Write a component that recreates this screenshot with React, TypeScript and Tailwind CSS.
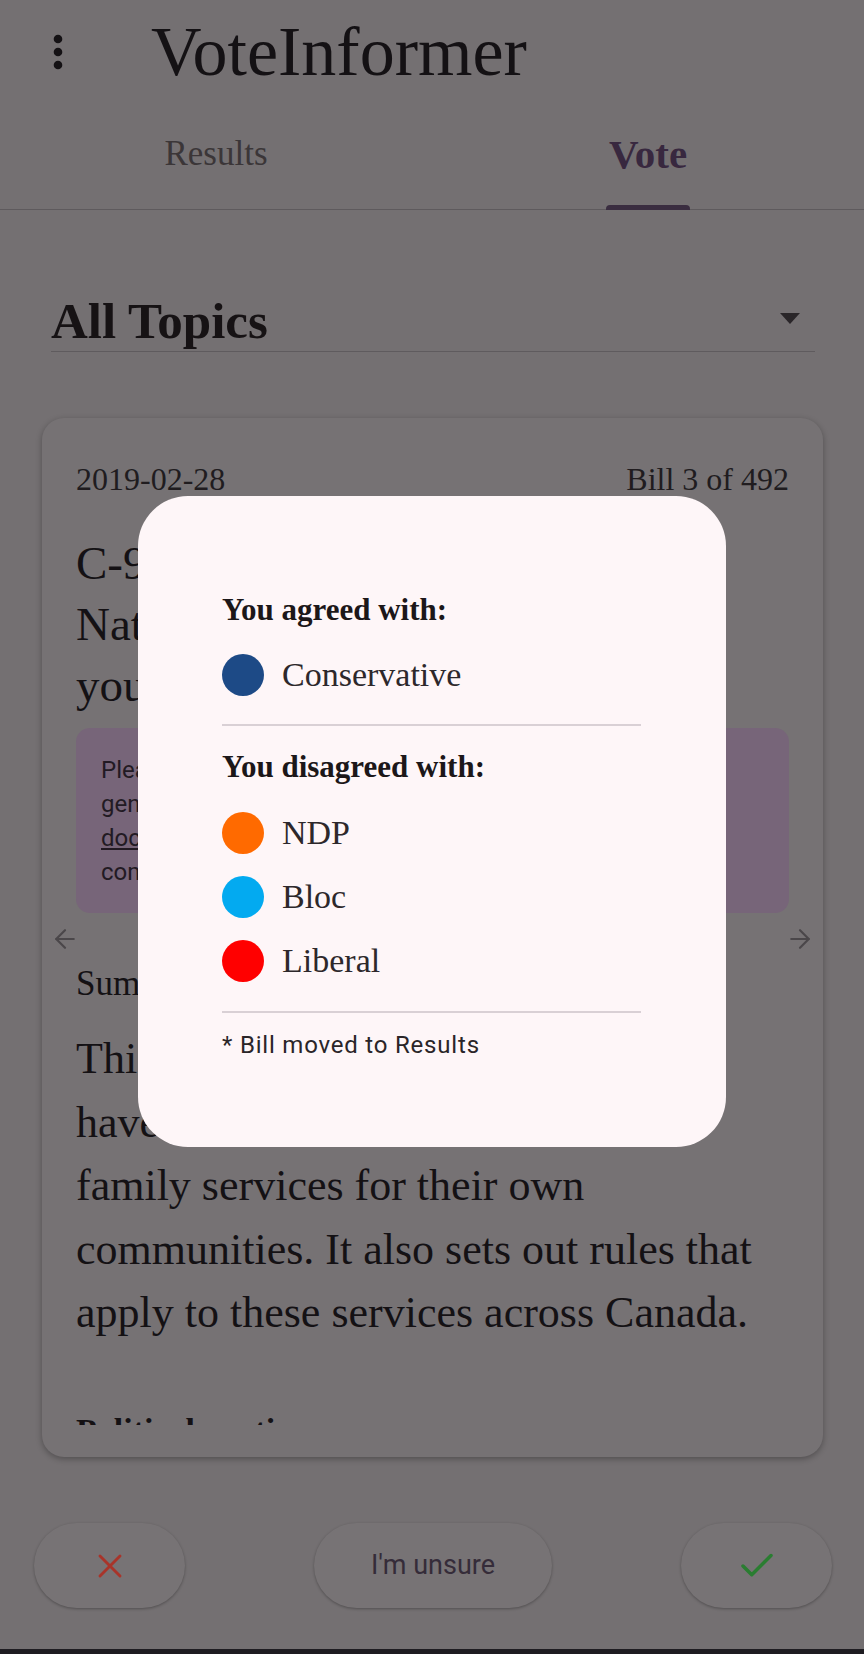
import { ArrowLeft, ArrowRight, X, Check } from "lucide-react";

const serif = { fontFamily: '"Liberation Serif", "Times New Roman", serif' };
const sans = { fontFamily: 'Roboto, "Liberation Sans", Arial, sans-serif' };

const agreed = [{ name: "Conservative", color: "bg-[#1d4a86]" }];
const disagreed = [
  { name: "NDP", color: "bg-[#ff6a00]" },
  { name: "Bloc", color: "bg-[#03aaf0]" },
  { name: "Liberal", color: "bg-[#ff0000]" },
];

function PartyRow({ name, color }: { name: string; color: string }) {
  return (
    <div className="flex h-[64px] items-center gap-[18px]">
      <span className={`h-[42px] w-[42px] shrink-0 rounded-full ${color}`} />
      <span className="text-[34px] leading-none text-[#2d282b]" style={serif}>
        {name}
      </span>
    </div>
  );
}

export default function App() {
  return (
    <div className="flex h-[1654px] flex-col bg-[#747072] text-[#141114]" style={serif}>
      {/* App bar */}
      <div className="flex h-[104px] items-center pl-[46px]">
        <svg width="24" height="40" viewBox="0 0 24 40" className="text-[#141114]">
          <circle cx="12" cy="7" r="4.3" fill="currentColor" />
          <circle cx="12" cy="20" r="4.3" fill="currentColor" />
          <circle cx="12" cy="33" r="4.3" fill="currentColor" />
        </svg>
        <h1 className="ml-[81px] text-[70px] leading-none">VoteInformer</h1>
      </div>

      {/* Tabs */}
      <div className="flex h-[106px] border-b border-[#5e5a5d]">
        <div className="flex flex-1 items-center justify-center pb-[4px] text-[35px] text-[#3b3638]">
          Results
        </div>
        <div className="relative flex flex-1 items-center justify-center pb-[4px] text-[41px] font-bold text-[#38283f]">
          Vote
          <span className="absolute bottom-[-1px] left-1/2 h-[5px] w-[84px] -translate-x-1/2 rounded-t-[4px] bg-[#3a2d40]" />
        </div>
      </div>

      {/* Topic dropdown */}
      <div className="ml-[51px] mr-[49px] mt-[82px] flex h-[60px] items-center justify-between border-b border-[#5f5b5e]">
        <span className="text-[51px] font-bold leading-none text-[#161214]">All Topics</span>
        <svg width="20" height="11" viewBox="0 0 20 11" className="mr-[15px] mb-[6px]">
          <path d="M0 0 L20 0 L10 11 Z" fill="#2a2629" />
        </svg>
      </div>

      {/* Bill card */}
      <div className="ml-[42px] mr-[41px] mt-[66px] flex h-[1039px] flex-col rounded-[22px] bg-[#767274] pb-[32px] pt-[41px] shadow-[0_2px_6px_rgba(0,0,0,0.3)]">
        <div className="flex h-10 items-center justify-between px-[34px] text-[32px] text-[#201c1f]">
          <span>2019-02-28</span>
          <span>Bill 3 of 492</span>
        </div>

        <div className="flex-1 overflow-hidden">
          <h2 className="mt-[34px] px-[34px] text-[47px] leading-[61px]">
            C-92 An Act respecting First
            <br />
            Nations, Inuit and Métis children,
            <br />
            youth and families
          </h2>

          <div className="mx-[34px] mt-[12px] rounded-[14px] bg-[#776579] px-[25px] pb-[24px] pt-[25px] text-[24px] leading-[34px] text-[#221a23]" style={sans}>
            Please note: these summaries are written
            <br />
            general terms. Refer to the <span className="underline">official</span>
            <br />
            <span className="underline">documents</span> for the full text and
            <br />
            complete context of each bill.
          </div>

          <div className="mt-[6px] flex h-10 items-center justify-between px-[8px] text-[#4b474a]">
            <ArrowLeft size={30} strokeWidth={1.75} />
            <ArrowRight size={30} strokeWidth={1.75} />
          </div>

          <div className="mt-[5px] px-[34px] text-[35px] leading-[40px]">Summary</div>

          <p className="mt-[23px] px-[34px] text-[44px] leading-[63.5px]">
            This bill lets Indigenous peoples
            <br />
            have a greater say over child and
            <br />
            family services for their own
            <br />
            communities. It also sets out rules that
            <br />
            apply to these services across Canada.
          </p>

          <div className="mt-[66px] px-[34px] text-[34px] font-bold leading-[40px]">Political parties</div>
        </div>
      </div>

      {/* Vote buttons */}
      <div className="mt-[66px] flex items-center justify-between pl-[34px] pr-[32px]">
        <button className="flex h-[85px] w-[151px] items-center justify-center rounded-full bg-[#777375] shadow-[0_1px_3px_rgba(0,0,0,0.3)]">
          <X size={40} strokeWidth={1.75} className="text-[#a8342a]" />
        </button>
        <button
          className="flex h-[85px] w-[238px] items-center justify-center rounded-full bg-[#777375] text-[27px] text-[#352c39] shadow-[0_1px_3px_rgba(0,0,0,0.3)]"
          style={sans}
        >
          I'm unsure
        </button>
        <button className="flex h-[85px] w-[151px] items-center justify-center rounded-full bg-[#777375] shadow-[0_1px_3px_rgba(0,0,0,0.3)]">
          <Check size={42} strokeWidth={2} className="text-[#2a7d31]" />
        </button>
      </div>

      <div className="mt-auto h-[5px] bg-[#1e1c21]" />

      {/* Result dialog */}
      <div className="fixed inset-0 flex items-center justify-center">
        <div className="mb-[11px] w-[588px] rounded-[50px] bg-[#fef6f8] pb-[87px] pl-[84px] pr-[85px] pt-[94px]">
          <div className="flex h-10 items-center text-[31px] font-bold text-[#1c1719]">You agreed with:</div>
          <div className="mt-[13px]">
            {agreed.map((p) => (
              <PartyRow key={p.name} {...p} />
            ))}
          </div>
          <div className="mt-[17px] h-[2px] bg-[#d9d0d5]" />
          <div className="mt-[21px] flex h-10 items-center text-[31px] font-bold text-[#1c1719]">
            You disagreed with:
          </div>
          <div className="mt-[14px]">
            {disagreed.map((p) => (
              <PartyRow key={p.name} {...p} />
            ))}
          </div>
          <div className="mt-[18px] h-[2px] bg-[#d9d0d5]" />
          <div className="mt-[17px] flex h-[30px] items-center text-[24px] tracking-[0.8px] text-[#2a2528]" style={sans}>
            * Bill moved to Results
          </div>
        </div>
      </div>
    </div>
  );
}
